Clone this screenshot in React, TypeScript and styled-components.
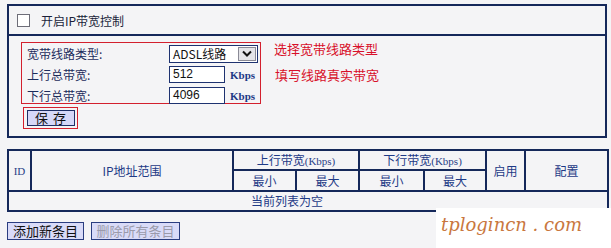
import React from "react";
import styled, { createGlobalStyle } from "styled-components";

const Global = createGlobalStyle`
  html, body { margin: 0; padding: 0; background: #f4f4f6; }
  body { font-family: "Noto Sans CJK SC", "Noto Sans", sans-serif; font-size: 12px; color: #1c2c5c; }
  * { box-sizing: border-box; }
`;

const Page = styled.div`
  position: relative;
  width: 611px;
  height: 248px;
  padding: 4px 0 0 7px;
  overflow: hidden;
`;

const Panel = styled.div`
  width: 600px;
  height: 134px;
  border: 2px solid #15285a;
  display: flex;
  flex-direction: column;
`;

const PanelHead = styled.div`
  height: 30px;
  border-bottom: 2px solid #15285a;
  display: flex;
  align-items: center;
  padding-left: 8px;
  gap: 11px;
  color: #1a1f3a;
  font-size: 12px;
`;

const Check = styled.span`
  width: 13px;
  height: 13px;
  background: #fff;
  border: 1px solid #6d6d78;
`;

const PanelBody = styled.div`
  padding: 6px 0 0 12px;
  display: flex;
  flex-direction: column;
  gap: 3px;
`;

const TopRow = styled.div`
  display: flex;
  gap: 13px;
`;

const RedBox = styled.div`
  width: 240px;
  height: 62px;
  border: 1px solid #d3202e;
  display: grid;
  grid-template-columns: 142px 61px 1fr;
  grid-auto-rows: 21px;
  align-items: center;
  padding-left: 5px;
`;

const Label = styled.span`
  font-size: 12px;
  color: #1c2c5c;
  line-height: 14px;
`;

const Select = styled.div`
  grid-column: span 2;
  width: 89px;
  height: 18px;
  border: 1px solid #1e3270;
  background: #fff;
  display: flex;
  align-items: center;
  justify-content: space-between;
  padding: 0 1px 0 3px;
  font-size: 12px;
  color: #111;
`;

const Arrow = styled.span`
  width: 18px;
  height: 14px;
  background: #e4e4e8;
  border: 1px solid #8a8a96;
  display: flex;
  align-items: center;
  justify-content: center;
`;

const Input = styled.div`
  width: 56px;
  height: 17px;
  border: 1px solid #1e3270;
  background: #fff;
  font-family: "Liberation Sans", sans-serif;
  font-size: 12px;
  color: #111;
  padding-left: 3px;
  line-height: 15px;
`;

const Unit = styled.span`
  font-family: "Liberation Serif", serif;
  font-weight: bold;
  font-size: 11px;
  color: #1e3a86;
`;

const Notes = styled.div`
  display: flex;
  flex-direction: column;
  gap: 8px;
  margin-top: -2px;
`;

const Note = styled.span<{ $indent?: number }>`
  color: #d8102a;
  font-size: 13px;
  line-height: 18px;
  padding-left: ${(p) => p.$indent ?? 0}px;
`;

const SaveFrame = styled.div`
  margin-left: 2px;
  width: 55px;
  height: 22px;
  border: 1px solid #d3202e;
  display: flex;
  align-items: center;
  justify-content: center;
`;

const SaveBtn = styled.div`
  width: 48px;
  height: 16px;
  border: 1px solid #1e2f66;
  background: #d6d8f8;
  color: #111;
  font-size: 13px;
  line-height: 14px;
  text-align: center;
  letter-spacing: 5px;
  padding-left: 5px;
`;

const Table = styled.table`
  margin-top: 11px;
  width: 600px;
  border-collapse: collapse;
  table-layout: fixed;
  border: 2px solid #15285a;
`;

const Cell = styled.td<{ $h?: number }>`
  border: 2px solid #15285a;
  padding: 0;
  height: ${(p) => p.$h ?? 20}px;
  text-align: center;
  color: #1e3a86;
  font-size: 12px;
  line-height: 14px;
  font-weight: normal;
`;

const Serif = styled.span`
  font-family: "Liberation Serif", serif;
  font-size: 11px;
  color: #2a3f86;
`;

const EmptyCell = styled(Cell)`
  text-align: left;
  padding-left: 242px;
`;

const Actions = styled.div`
  margin-top: 10px;
  display: flex;
  gap: 7px;
`;

const ActionBtn = styled.div<{ $w: number; $disabled?: boolean }>`
  width: ${(p) => p.$w}px;
  height: 18px;
  border: 1px solid #2a3d80;
  background: #d9dbf8;
  color: ${(p) => (p.$disabled ? "#9a9aaa" : "#111")};
  font-size: 13px;
  line-height: 16px;
  text-align: center;
`;

const Watermark = styled.div`
  position: absolute;
  left: 436px;
  top: 208px;
  width: 175px;
  height: 40px;
  background: #fff;
  color: #c9773e;
  font-family: "DejaVu Serif", serif;
  font-style: italic;
  font-size: 18px;
  padding: 6px 0 0 5px;
  white-space: pre;
`;

export default function App() {
  return (
    <>
      <Global />
      <Page>
        <Panel>
          <PanelHead>
            <Check />
            <span>开启IP带宽控制</span>
          </PanelHead>
          <PanelBody>
            <TopRow>
              <RedBox>
                <Label>宽带线路类型:</Label>
                <Select>
                  <span>ADSL线路</span>
                  <Arrow>
                    <svg width="10" height="7" viewBox="0 0 10 7">
                      <path d="M1 1.5 L5 5.5 L9 1.5" stroke="#111" strokeWidth="2" fill="none" />
                    </svg>
                  </Arrow>
                </Select>
                <Label>上行总带宽:</Label>
                <Input>512</Input>
                <Unit>Kbps</Unit>
                <Label>下行总带宽:</Label>
                <Input>4096</Input>
                <Unit>Kbps</Unit>
              </RedBox>
              <Notes>
                <Note>选择宽带线路类型</Note>
                <Note $indent={1}>填写线路真实带宽</Note>
              </Notes>
            </TopRow>
            <SaveFrame>
              <SaveBtn>保存</SaveBtn>
            </SaveFrame>
          </PanelBody>
        </Panel>
        <Table>
          <colgroup>
            <col style={{ width: 23 }} />
            <col style={{ width: 202 }} />
            <col style={{ width: 63 }} />
            <col style={{ width: 63 }} />
            <col style={{ width: 65 }} />
            <col style={{ width: 62 }} />
            <col style={{ width: 39 }} />
            <col style={{ width: 83 }} />
          </colgroup>
          <tbody>
            <tr>
              <Cell as="th" rowSpan={2}>
                <Serif>ID</Serif>
              </Cell>
              <Cell as="th" rowSpan={2}>IP地址范围</Cell>
              <Cell as="th" colSpan={2}>
                上行带宽<Serif>(Kbps)</Serif>
              </Cell>
              <Cell as="th" colSpan={2}>
                下行带宽<Serif>(Kbps)</Serif>
              </Cell>
              <Cell as="th" rowSpan={2}>启用</Cell>
              <Cell as="th" rowSpan={2}>配置</Cell>
            </tr>
            <tr>
              <Cell as="th" $h={21}>最小</Cell>
              <Cell as="th" $h={21}>最大</Cell>
              <Cell as="th" $h={21}>最小</Cell>
              <Cell as="th" $h={21}>最大</Cell>
            </tr>
            <tr>
              <EmptyCell colSpan={8}>当前列表为空</EmptyCell>
            </tr>
          </tbody>
        </Table>
        <Actions>
          <ActionBtn $w={77}>添加新条目</ActionBtn>
          <ActionBtn $w={89} $disabled>删除所有条目</ActionBtn>
        </Actions>
        <Watermark>tplogincn . com</Watermark>
      </Page>
    </>
  );
}
